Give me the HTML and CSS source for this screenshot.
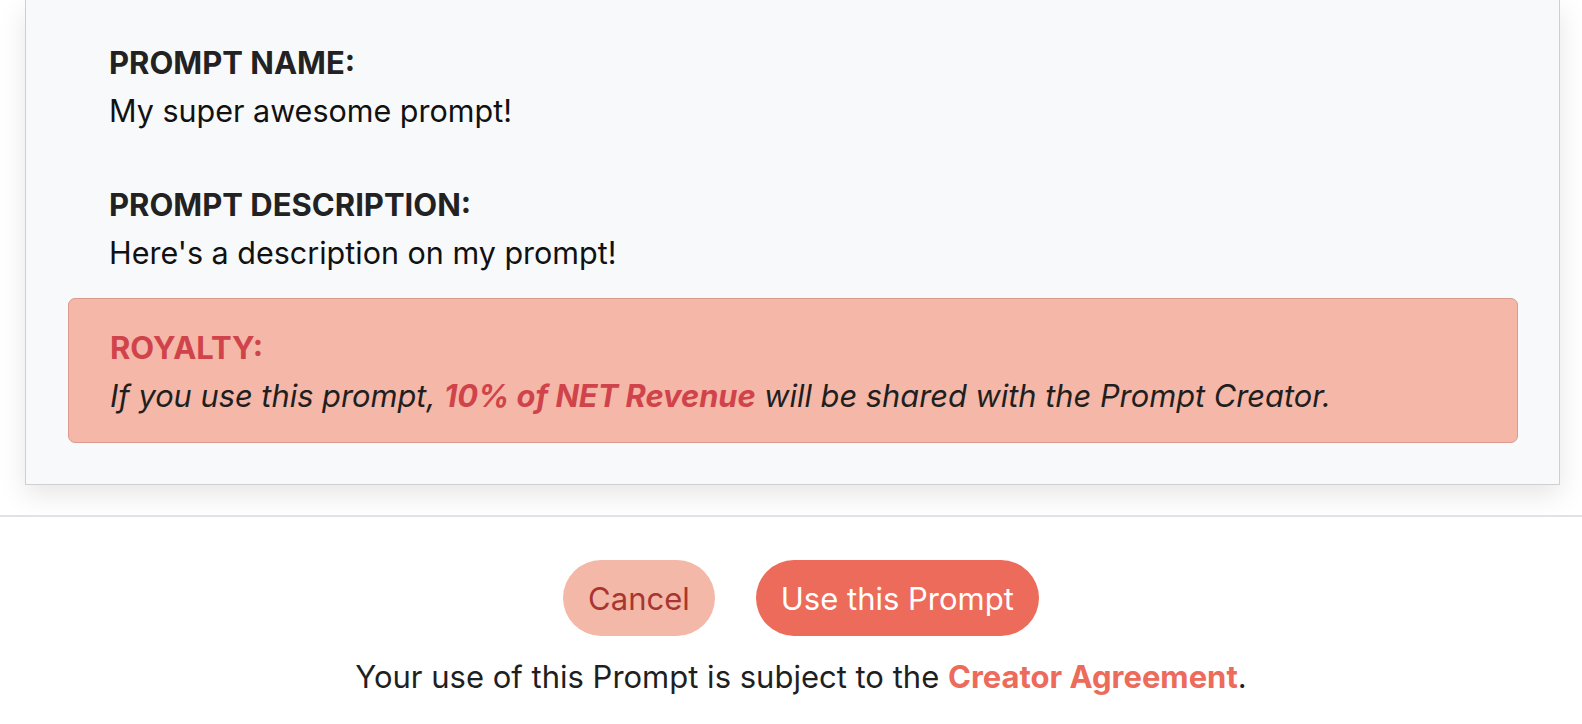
FILE: index.html
```html
<!DOCTYPE html>
<html>
<head>
<meta charset="utf-8">
<link rel="stylesheet" href="styles.css">
</head>
<body>
<div class="card">
  <div class="field">
    <div class="label">PROMPT NAME:</div>
    <div class="value">My super awesome prompt!</div>
  </div>
  <div class="field field-second">
    <div class="label">PROMPT DESCRIPTION:</div>
    <div class="value">Here's a description on my prompt!</div>
  </div>
  <div class="royalty">
    <div class="royalty-label">ROYALTY:</div>
    <div class="royalty-text">If you use this prompt, <strong>10% of NET Revenue</strong> will be shared with the Prompt Creator.</div>
  </div>
</div>
<hr class="divider">
<div class="footer">
  <div class="actions">
    <button class="btn btn-cancel">Cancel</button>
    <button class="btn btn-primary">Use this Prompt</button>
  </div>
  <p class="terms">Your use of this Prompt is subject to the <a class="terms-link" href="#">Creator Agreement</a>.</p>
</div>
</body>
</html>
```

FILE: styles.css
```css
*, *::before, *::after {
  box-sizing: border-box;
}
html, body {
  margin: 0;
  padding: 0;
  background: #ffffff;
}
body {
  font-family: Inter, "Noto Sans", sans-serif;
  font-size: 31px;
  line-height: 47.5px;
  color: #1f1f1f;
  overflow: hidden;
}
.card {
  margin-left: 25px;
  width: 1535px;
  background: #f8f9fb;
  border: 1px solid #cfcfcf;
  border-top: none;
  box-shadow: 0 10px 26px rgba(0, 0, 0, 0.10);
  padding: 39px 41px 41px 41.5px;
}
.field {
  padding-left: 41.5px;
}
.field-second {
  margin-top: 47px;
}
.label {
  font-weight: 700;
  color: #222222;
}
.value {
  font-weight: 400;
  font-size: 30.5px;
  color: #111111;
}
.royalty {
  margin-top: 22px;
  background: #f4b7a8;
  border: 1px solid #dc9a8e;
  border-radius: 7px;
  padding: 25px 40px 23px 41.5px;
}
.royalty-label {
  font-weight: 700;
  color: #d0434a;
}
.royalty-text {
  font-style: italic;
  font-size: 30.8px;
  color: #1f1f1f;
}
.royalty-text strong {
  color: #d0434a;
  font-weight: 700;
}
.divider {
  margin: 30px 0 0 0;
  border: none;
  height: 2px;
  background: #dfe2e6;
}
.footer {
  padding-left: 20px;
  text-align: center;
}
.actions {
  display: flex;
  justify-content: center;
  gap: 41px;
  margin-top: 43px;
}
.btn {
  font-family: Inter, "Noto Sans", sans-serif;
  font-size: 31px;
  height: 76px;
  border: none;
  border-radius: 38px;
  padding: 0 25px;
  cursor: pointer;
}
.btn-cancel {
  background: #f4b8a8;
  color: #a93531;
}
.btn-primary {
  background: #ec6b5a;
  color: #ffffff;
}
.terms {
  margin: 17px 0 0 0;
  color: #1f1f1f;
}
.terms-link {
  color: #ec6b5a;
  font-weight: 700;
  text-decoration: none;
}
```
